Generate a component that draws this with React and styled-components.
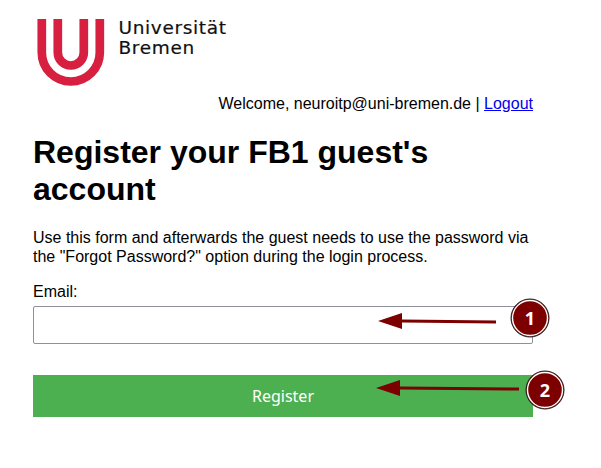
import React from 'react';
import styled, { createGlobalStyle } from 'styled-components';

const GlobalStyle = createGlobalStyle`
  html, body {
    margin: 0;
    padding: 0;
    background: #fff;
    font-family: "Liberation Sans", Arial, sans-serif;
    color: #000;
  }
`;

const Page = styled.div`
  position: relative;
  width: 601px;
  height: 468px;
  overflow: hidden;
  box-sizing: border-box;
  padding: 0 68px 0 33px;
`;

const Brand = styled.div`
  display: flex;
  align-items: flex-start;
  height: 94px;
  padding-top: 14px;
  box-sizing: border-box;
`;

const BrandName = styled.div`
  margin: 4px 0 0 14px;
  font-family: "DejaVu Sans", sans-serif;
  font-size: 18.5px;
  line-height: 19.5px;
  letter-spacing: 0.65px;
  color: #111;
  -webkit-text-stroke: 0.2px #111;
`;

const UserBar = styled.div`
  text-align: right;
  font-size: 16px;
  line-height: 20px;

  a {
    color: #0000ee;
    text-decoration: underline;
  }
`;

const Title = styled.h1`
  margin: 20px 0 0;
  font-size: 32px;
  line-height: 37px;
  font-weight: 700;
`;

const Lead = styled.p`
  margin: 20px 0 0;
  font-size: 16px;
  line-height: 19px;
`;

const Label = styled.label`
  display: block;
  margin-top: 17px;
  font-size: 16px;
  line-height: 18px;
`;

const EmailInput = styled.input`
  display: block;
  box-sizing: border-box;
  width: 100%;
  height: 38px;
  margin-top: 5px;
  border: 1px solid #8f8f9d;
  border-radius: 2px;
  background: #fff;
`;

const RegisterButton = styled.button`
  display: block;
  width: 100%;
  height: 42px;
  margin-top: 31px;
  border: 0;
  background: #4caf50;
  color: #fff;
  font-family: "Noto Sans", sans-serif;
  font-size: 16px;
`;

const Overlay = styled.svg`
  position: absolute;
  top: 0;
  left: 0;
  pointer-events: none;
`;

const Callout = ({ cx, cy, n }) => (
  <g>
    <circle cx={cx} cy={cy} r="19" fill="#7d0000" stroke="#222" strokeWidth="1" />
    <circle cx={cx} cy={cy} r="17.5" fill="none" stroke="#fff" strokeWidth="1.4" />
    <text
      x={cx}
      y={cy + 6.5}
      textAnchor="middle"
      fill="#fff"
      fontFamily="Open Sans, sans-serif"
      fontWeight="700"
      fontSize="18"
    >
      {n}
    </text>
  </g>
);

const Logo = () => (
  <svg width="68" height="74" viewBox="0 0 68 74" style={{ marginLeft: 3.5, marginTop: 5 }}>
    <g fill="none" stroke="#d71f3f" strokeWidth="8.7">
      <path d="M4.8 0 V33.5 A29 29 0 0 0 62.8 33.5 V0" />
      <path d="M20.8 0 V33.5 A13 13 0 0 0 46.8 33.5 V0" />
    </g>
  </svg>
);

export default function App() {
  return (
    <>
      <GlobalStyle />
      <Page>
        <Brand>
          <Logo />
          <BrandName>
            Universität
            <br />
            Bremen
          </BrandName>
        </Brand>
        <UserBar>
          Welcome, neuroitp@uni-bremen.de | <a href="#logout">Logout</a>
        </UserBar>
        <Title>Register your FB1 guest's account</Title>
        <Lead>
          Use this form and afterwards the guest needs to use the password via the "Forgot
          Password?" option during the login process.
        </Lead>
        <Label htmlFor="email">Email:</Label>
        <EmailInput id="email" type="email" />
        <RegisterButton type="button">Register</RegisterButton>
        <Overlay width="601" height="468" viewBox="0 0 601 468">
          <path d="M378 321 L402 313 V319.5 L496 320.5 V323.5 L402 322.5 V329 Z" fill="#7d0000" />
          <path d="M376 388 L400 380 V386.5 L519 387.5 V390.5 L400 389.5 V396 Z" fill="#7d0000" />
          <Callout cx={530} cy={318} n="1" />
          <Callout cx={545} cy={390} n="2" />
        </Overlay>
      </Page>
    </>
  );
}
